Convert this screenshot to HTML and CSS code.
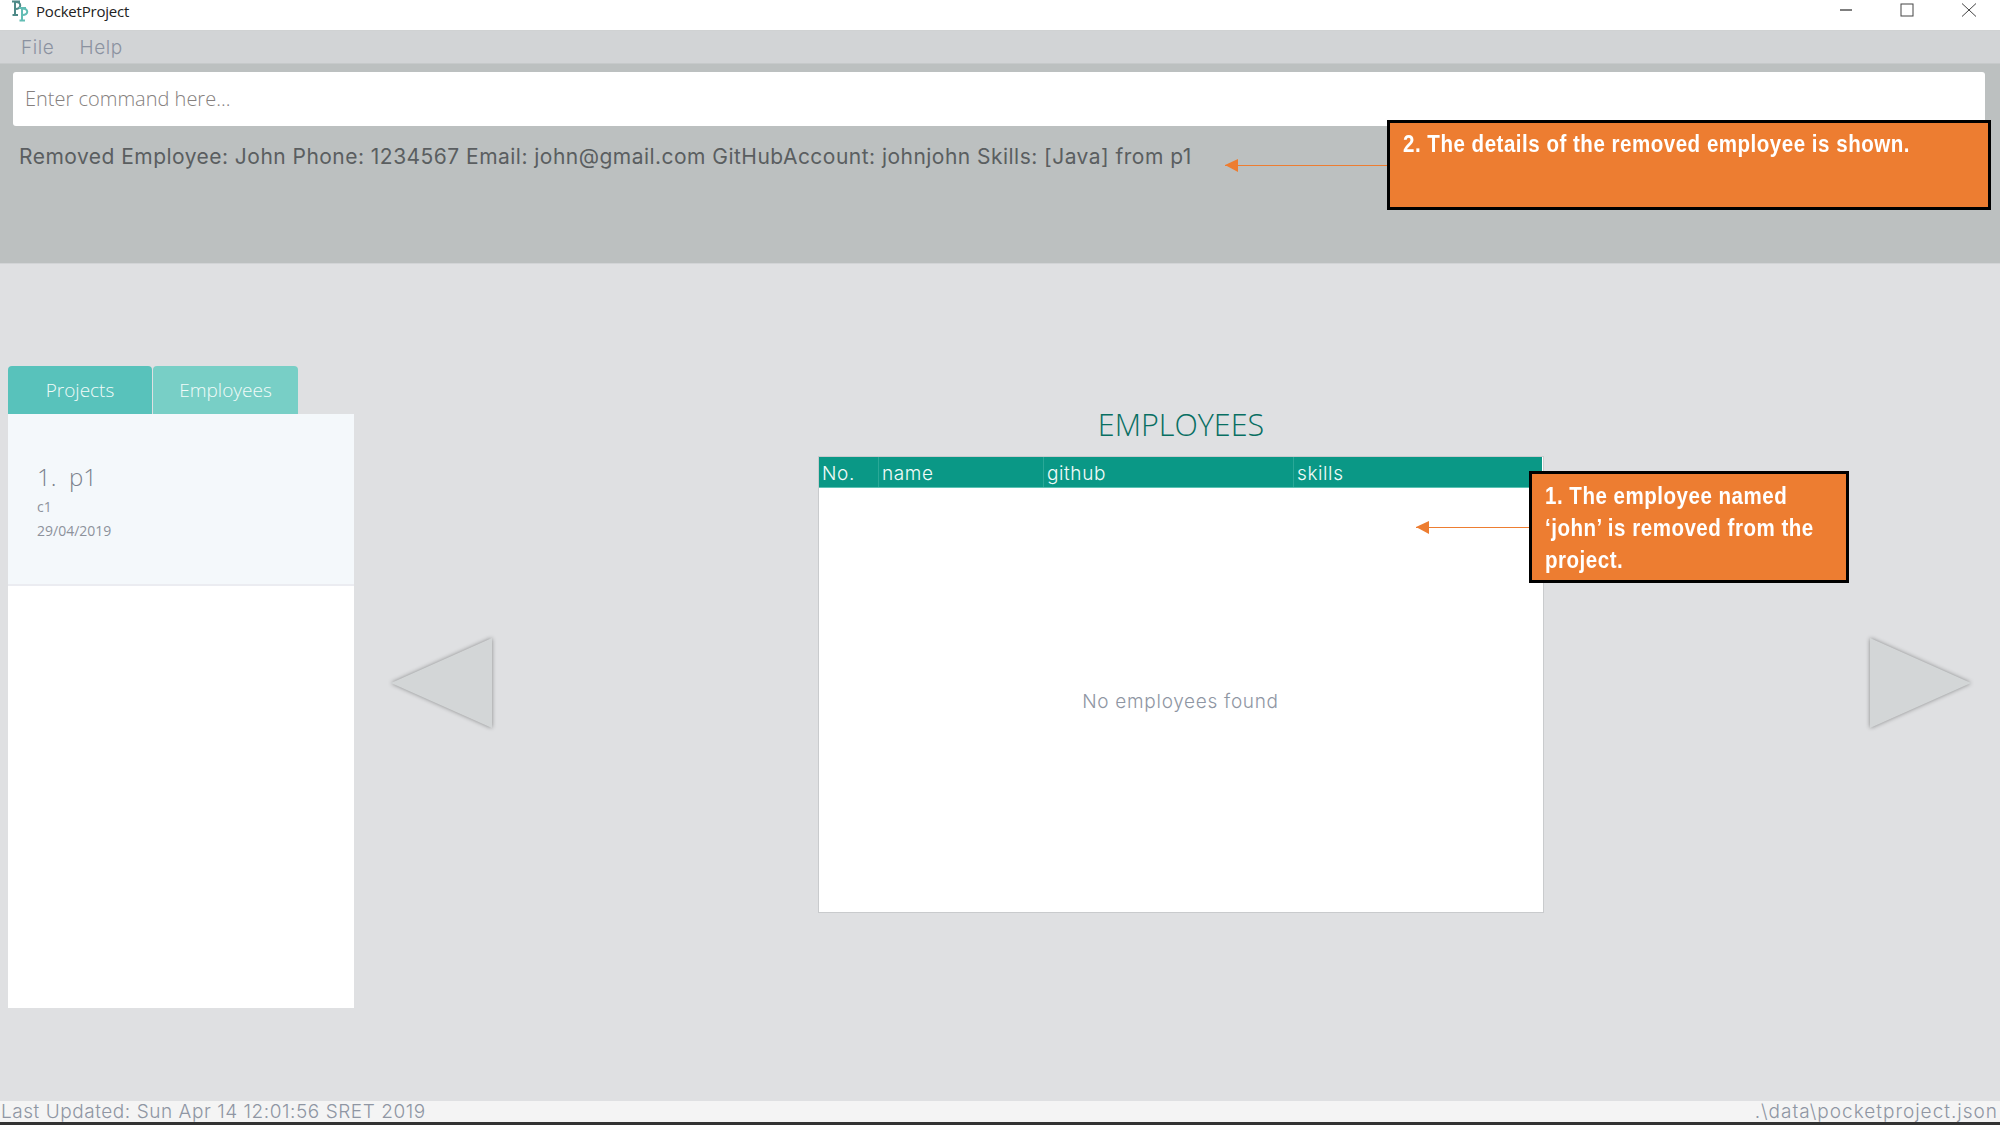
FILE: index.html
```html
<!DOCTYPE html>
<html lang="en">
<head>
    <meta charset="UTF-8">
    <title>PocketProject</title>
    <link rel="stylesheet" href="styles.css">
</head>
<body>
    <div class="titlebar">
        <svg class="app-icon" width="18" height="22" viewBox="0 0 18 22">
            <path d="M1 1.500H9M4 1.500V15M1.500 15H7M4 2C11 1 11 9.500 4 9" fill="none" stroke="#4f8a88" stroke-width="2"/>
            <path d="M8 8H15M11 8V20.500M8.500 20.500H14M11 8.500C18 8 18 15.500 11 15" fill="none" stroke="#62bdb4" stroke-width="2"/>
        </svg>
        <span class="app-name">PocketProject</span>
        <div class="window-controls">
            <svg width="14" height="14" viewBox="0 0 14 14"><path d="M1 7H13" stroke="#555" stroke-width="1.500"/></svg>
            <svg width="14" height="14" viewBox="0 0 14 14"><rect x="1" y="1" width="12" height="12" fill="none" stroke="#444" stroke-width="1"/></svg>
            <svg width="16" height="14" viewBox="0 0 16 14"><path d="M1 0.500L15 13.500M15 0.500L1 13.500" stroke="#444" stroke-width="1"/></svg>
        </div>
    </div>

    <div class="menubar">
        <span>File</span>
        <span>Help</span>
    </div>

    <div class="command-area">
        <div class="command-box">Enter command here...</div>
        <div class="result-text">Removed Employee: John Phone: 1234567 Email: john@gmail.com GitHubAccount: johnjohn Skills: [Java] from p1</div>
    </div>

    <div class="main">
        <div class="side">
            <div class="tabs">
                <div class="tab tab-active">Projects</div>
                <div class="tab">Employees</div>
            </div>
            <div class="project-list">
                <div class="project-item">
                    <div class="project-name">1.&nbsp;&nbsp;p1</div>
                    <div class="project-meta">c1</div>
                    <div class="project-meta">29/04/2019</div>
                </div>
            </div>
        </div>

        <svg class="nav-arrow nav-left" width="103" height="92" viewBox="0 0 103 92"><polygon points="102,1 102,91 1,46"/></svg>

        <div class="employees">
            <div class="employees-title">EMPLOYEES</div>
            <div class="table-box">
                <div class="table-head">
                    <div class="col col-no">No.</div>
                    <div class="col col-name">name</div>
                    <div class="col col-github">github</div>
                    <div class="col col-skills">skills</div>
                </div>
                <div class="table-empty">No employees found</div>
            </div>
        </div>

        <svg class="nav-arrow nav-right" width="103" height="92" viewBox="0 0 103 92"><polygon points="1,1 1,91 102,46"/></svg>
    </div>

    <div class="statusbar">
        <span>Last Updated: Sun Apr 14 12:01:56 SRET 2019</span>
        <span class="status-file">.\data\pocketproject.json</span>
    </div>
    <div class="bottom-line"></div>

    <!-- annotations on top of the screenshot -->
    <div class="callout callout-result"><div class="callout-text">2. The details of the removed employee is shown.</div></div>
    <div class="pointer pointer-result"></div>
    <div class="callout callout-table"><div class="callout-text">1. The employee named ‘john’ is removed from the project.</div></div>
    <div class="pointer pointer-table"></div>
</body>
</html>
```

FILE: styles.css
```css
* {
    box-sizing: border-box;
}
body {
    margin: 0;
    width: 2000px;
    height: 1125px;
    overflow: hidden;
    display: flex;
    flex-direction: column;
    position: relative;
    font-family: 'Inter', sans-serif;
    font-weight: 300;
    background-color: #dfe0e2;
}
.titlebar {
    height: 31px;
    flex: none;
    display: flex;
    align-items: center;
    padding-left: 11px;
    padding-bottom: 9px;
    background-color: #fff;
    border-bottom: 1px solid #d0d2d3;
}
.app-icon {
    margin-right: 7px;
}
.app-name {
    font-family: 'Open Sans', sans-serif;
    font-weight: 400;
    font-size: 15px;
    letter-spacing: -0.2px;
    color: #222;
}
.window-controls {
    margin-left: auto;
    margin-right: 23px;
    margin-top: -1px;
    display: flex;
    gap: 47px;
}
.menubar {
    height: 32px;
    flex: none;
    display: flex;
    align-items: center;
    gap: 25px;
    padding-left: 21px;
    background-color: #d2d4d6;
    font-size: 19px;
    letter-spacing: 0.6px;
    color: #8b92a0;
}
.command-area {
    height: 201px;
    flex: none;
    padding: 8px 15px 0 13px;
    background-color: #bcc0c0;
    border-top: 1px solid #c6c9ca;
    border-bottom: 1px solid #d2d4d6;
}
.command-box {
    height: 54px;
    padding-left: 12px;
    padding-bottom: 2px;
    display: flex;
    align-items: center;
    background-color: #fff;
    border-radius: 3px;
    font-family: 'Open Sans', sans-serif;
    font-size: 20px;
    color: #85807e;
}
.result-text {
    margin-top: 18px;
    margin-left: 6px;
    font-size: 21px;
    font-weight: 400;
    letter-spacing: 0.47px;
    color: #5a5e60;
}
.main {
    flex: 1;
    display: flex;
    align-items: flex-start;
    padding-left: 8px;
}
.side {
    width: 346px;
    flex: none;
    margin-top: 102px;
}
.tabs {
    display: flex;
    gap: 1px;
}
.tab {
    width: 145px;
    height: 48px;
    display: flex;
    align-items: center;
    justify-content: center;
    background-color: #78cfc6;
    border-radius: 4px 4px 0 0;
    font-family: 'Open Sans', sans-serif;
    font-size: 19px;
    color: #f1fbf9;
}
.tab-active {
    width: 144px;
    background-color: #58c2bb;
}
.project-list {
    height: 594px;
    background-color: #fff;
}
.project-item {
    height: 172px;
    padding: 44px 0 0 29px;
    background-color: #f4f8fb;
    border-bottom: 2px solid #ebecf1;
    font-family: 'Open Sans', sans-serif;
    color: #7b818c;
}
.project-name {
    font-size: 24px;
    line-height: 37px;
}
.project-meta {
    font-size: 14px;
    font-weight: 400;
    line-height: 24px;
    color: #8d929b;
}
.nav-arrow {
    flex: none;
    align-self: center;
    filter: drop-shadow(0 0 2px rgba(0, 0, 0, 0.4));
}
.nav-arrow polygon {
    fill: #d3d6d7;
}
.nav-left {
    margin-left: 36px;
}
.nav-right {
    margin-left: 325px;
}
.employees {
    width: 726px;
    flex: none;
    margin-left: 325px;
    margin-top: 143px;
}
.employees-title {
    height: 49px;
    text-align: center;
    font-family: 'Open Sans', sans-serif;
    font-size: 30.5px;
    line-height: 34px;
    color: #086f62;
}
.table-box {
    height: 457px;
    padding-right: 1px;
    display: flex;
    flex-direction: column;
    background-color: #fff;
    border: 1px solid #c9cbcd;
}
.table-head {
    height: 31px;
    flex: none;
    display: flex;
    background-color: #0a9886;
    border-bottom: 1px solid #5cc2b4;
    font-size: 19px;
    letter-spacing: 0.6px;
    color: #f2fbf9;
}
.col {
    padding-left: 3px;
    line-height: 33px;
    border-right: 1px solid #2aa897;
}
.col-no {
    width: 60px;
}
.col-name {
    width: 165px;
}
.col-github {
    width: 250px;
}
.col-skills {
    flex: 1;
    border-right: 0;
}
.table-empty {
    flex: 1;
    padding-top: 2px;
    display: flex;
    align-items: center;
    justify-content: center;
    font-size: 19px;
    letter-spacing: 0.7px;
    color: #8f96a3;
}
.statusbar {
    height: 21px;
    flex: none;
    display: flex;
    justify-content: space-between;
    padding: 0 2px 0 1px;
    background-color: #f4f4f4;
    font-size: 19px;
    letter-spacing: 0.55px;
    line-height: 22px;
    color: #8f96a3;
}
.status-file {
    letter-spacing: 1px;
}
.bottom-line {
    height: 3px;
    flex: none;
    background-color: #333;
}
.callout {
    position: absolute;
    background-color: #ed7d31;
    border: 3px solid #000;
    font-family: 'Liberation Sans', sans-serif;
    font-weight: 700;
    font-size: 24px;
    line-height: 32px;
    letter-spacing: 0.6px;
    color: #fff;
}
/* no narrow face installed, so squeeze the bold one */
.callout-text {
    width: 116%;
    transform: scaleX(0.855);
    transform-origin: left top;
}
.callout-result {
    left: 1387px;
    top: 120px;
    width: 604px;
    height: 90px;
    padding: 5px 13px;
}
.callout-table {
    left: 1529px;
    top: 471px;
    width: 320px;
    height: 112px;
    padding: 6px 13px;
}
.pointer {
    position: absolute;
    height: 1px;
    background-color: #ed7d31;
}
.pointer::before {
    content: '';
    position: absolute;
    left: 0;
    top: -6px;
    border-top: 6px solid transparent;
    border-bottom: 7px solid transparent;
    border-right: 13px solid #ed7d31;
}
.pointer-result {
    left: 1225px;
    top: 165px;
    width: 162px;
}
.pointer-table {
    left: 1416px;
    top: 527px;
    width: 113px;
}
```
